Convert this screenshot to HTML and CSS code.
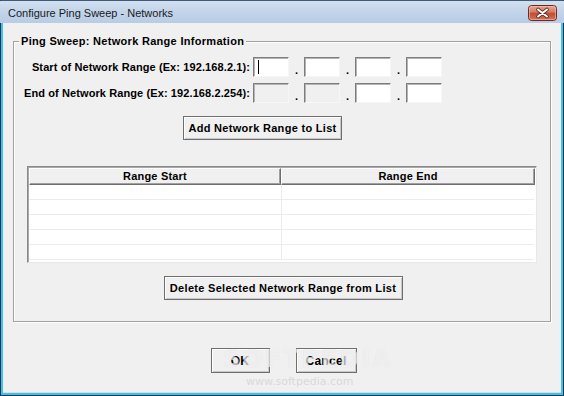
FILE: index.html
```html
<!DOCTYPE html>
<html>
<head>
<meta charset="utf-8">
<title>Configure Ping Sweep - Networks</title>
<link rel="stylesheet" href="styles.css">
</head>
<body>
<div class="window">
  <div class="titlebar">
    <span class="title">Configure Ping Sweep - Networks</span>
    <span class="close">
      <svg width="29" height="16" viewBox="0 0 29 16">
        <defs>
          <linearGradient id="cg" x1="0" y1="0" x2="0" y2="1">
            <stop offset="0" stop-color="#e8a796"/>
            <stop offset="0.45" stop-color="#d67a63"/>
            <stop offset="0.5" stop-color="#c24a30"/>
            <stop offset="1" stop-color="#d8725a"/>
          </linearGradient>
        </defs>
        <rect x="0.5" y="0.5" width="28" height="15" rx="3" fill="url(#cg)" stroke="#6e2a1c"/>
        <rect x="1.5" y="1.5" width="26" height="13" rx="2" fill="none" stroke="#f3c3b5" stroke-opacity="0.6"/>
        <path d="M10 4.5 L19 11.5 M19 4.5 L10 11.5" stroke="#5a2a22" stroke-width="3.6" stroke-linecap="round"/>
        <path d="M10 4.5 L19 11.5 M19 4.5 L10 11.5" stroke="#ffffff" stroke-width="2" stroke-linecap="round"/>
      </svg>
    </span>
  </div>
  <div class="client">
    <fieldset class="group">
      <legend class="legend">Ping Sweep: Network Range Information</legend>
      <div class="iprow">
        <span class="label">Start of Network Range (Ex: 192.168.2.1):</span>
        <span class="field"><span class="caret"></span></span><span class="dot">.</span>
        <span class="field"></span><span class="dot">.</span>
        <span class="field"></span><span class="dot">.</span>
        <span class="field"></span>
      </div>
      <div class="iprow">
        <span class="label">End of Network Range (Ex: 192.168.2.254):</span>
        <span class="field disabled"></span><span class="dot">.</span>
        <span class="field disabled"></span><span class="dot">.</span>
        <span class="field"></span><span class="dot">.</span>
        <span class="field"></span>
      </div>
      <div class="add-wrap">
        <button class="btn add">Add Network Range to List</button>
      </div>
      <div class="list">
        <div class="list-head">
          <div class="hcell">Range Start</div>
          <div class="hcell">Range End</div>
        </div>
        <div class="lrow"><div class="lcell"></div><div class="lcell"></div></div>
        <div class="lrow"><div class="lcell"></div><div class="lcell"></div></div>
        <div class="lrow"><div class="lcell"></div><div class="lcell"></div></div>
        <div class="lrow"><div class="lcell"></div><div class="lcell"></div></div>
        <div class="lrow"><div class="lcell"></div><div class="lcell"></div></div>
      </div>
      <div class="del-wrap">
        <button class="btn del">Delete Selected Network Range from List</button>
      </div>
    </fieldset>
    <div class="footer">
      <button class="btn ok">OK</button>
      <button class="btn cancel">Cancel</button>
    </div>
    <div class="wm-big">SOFTPEDIA</div>
    <div class="wm-url">www.softpedia.com</div>
  </div>
</div>
</body>
</html>
```
FILE: styles.css
```css
html, body {
  margin: 0;
  padding: 0;
  width: 564px;
  height: 396px;
  overflow: hidden;
  background: #1b2e45;
}

.window {
  box-sizing: border-box;
  width: 564px;
  height: 396px;
  border: 1px solid #1f3550;
  border-top-color: #3d5a7a;
  background: #3cc2ec;
  display: flex;
  flex-direction: column;
  font-family: "Liberation Sans", Arial, sans-serif;
}

.titlebar {
  height: 22px;
  flex: 0 0 22px;
  margin: 0 -1px;
  background: linear-gradient(#d3e0ef, #c4d5ea 45%, #b8cce5);
  display: flex;
  align-items: center;
  justify-content: space-between;
  padding: 0 7px 0 8px;
  box-sizing: border-box;
}

.title {
  font-family: "Liberation Sans", Arial, sans-serif;
  font-size: 11px;
  color: #1a1a1a;
  padding-top: 1px;
}

.close {
  display: flex;
  margin-top: 1px;
}

.client {
  position: relative;
  flex: 1;
  margin: 0 2px 2px 2px;
  background: #f0f0f0;
  box-shadow: inset 0 -1px 0 #dcdcdc;
  padding-top: 12px;
  font-size: 11px;
  font-weight: bold;
  color: #000;
}

.group {
  margin: 0 10px;
  padding: 9px 0 0 0;
  border: 1px solid #a0a0a0;
  box-shadow: inset 1px 1px 0 #ffffff, 1px 1px 0 #ffffff;
  min-inline-size: 0;
  height: 287px;
  box-sizing: border-box;
}

.legend {
  margin-left: 5px;
  padding: 0 2px;
  line-height: 13px;
  background: #f0f0f0;
  font-size: 11px;
  font-weight: bold;
  letter-spacing: 0.3px;
}

.iprow {
  display: flex;
  align-items: center;
  height: 20px;
  margin-bottom: 6px;
}

.label {
  flex: 0 0 236px;
  text-align: right;
  padding-right: 3px;
  white-space: nowrap;
  letter-spacing: 0.1px;
}

.field {
  position: relative;
  box-sizing: border-box;
  width: 36px;
  height: 20px;
  background: #ffffff;
  border: 1px solid;
  border-color: #7d7d7d #f6f6f6 #f6f6f6 #7d7d7d;
  box-shadow: inset 1px 1px 0 #b4b4b4;
}

.field.disabled {
  background: #f0f0f0;
}

.caret {
  display: block;
  width: 1px;
  height: 14px;
  margin: 2px 0 0 4px;
  background: #000;
}

.dot {
  width: 15px;
  text-align: center;
  align-self: flex-end;
  line-height: 14px;
}

.btn {
  font-family: "Liberation Sans", Arial, sans-serif;
  font-size: 11px;
  font-weight: bold;
  letter-spacing: 0.3px;
  color: #000;
  background: #f0f0f0;
  border: 1px solid #6e6e6e;
  box-shadow: inset 1px 1px 0 #ffffff, inset -1px -1px 0 #c8c8c8;
  padding: 0;
  box-sizing: border-box;
  border-radius: 0;
}

.add-wrap {
  margin-top: 13px;
  padding-left: 169px;
  display: flex;
}

.add {
  width: 159px;
  height: 24px;
}

.list {
  margin: 26px 0 0 13px;
  width: 510px;
  height: 97px;
  box-sizing: border-box;
  background: #ffffff;
  border: 1px solid;
  border-color: #8a8a8a #e8e8e8 #e8e8e8 #8a8a8a;
  box-shadow: inset 1px 1px 0 #a8a8a8;
  padding: 1px 2px 0 1px;
}

.list-head {
  display: grid;
  grid-template-columns: 252px 254px;
  height: 17px;
}

.hcell {
  box-sizing: border-box;
  background: #f0f0f0;
  border: 1px solid;
  border-color: #ffffff #6e6e6e #6e6e6e #ffffff;
  box-shadow: inset -1px -1px 0 #a0a0a0;
  text-align: center;
  line-height: 15px;
  letter-spacing: 0.2px;
}

.lrow {
  display: grid;
  grid-template-columns: 252px 254px;
  height: 15px;
  box-sizing: border-box;
  border-bottom: 1px solid #ececec;
}

.lcell + .lcell {
  border-left: 1px solid #ececec;
}

.del-wrap {
  margin-top: 13px;
  display: flex;
  justify-content: center;
  padding-left: 2px;
}

.del {
  width: 239px;
  height: 24px;
}

.footer {
  margin-top: 26px;
  display: flex;
  justify-content: center;
  gap: 26px;
  padding-left: 3px;
}

.ok {
  width: 59px;
  height: 25px;
  font-size: 12px;
}

.cancel {
  width: 61px;
  height: 25px;
  font-size: 12px;
}

.wm-big {
  position: absolute;
  left: 220px;
  top: 322px;
  font-family: "DejaVu Sans", sans-serif;
  font-size: 24px;
  font-weight: bold;
  letter-spacing: 2px;
  color: rgba(255, 255, 255, 0.5);
  text-shadow: 0 0 1px rgba(200, 200, 200, 0.45);
  pointer-events: none;
}

.wm-url {
  position: absolute;
  left: 243px;
  top: 352px;
  font-family: "DejaVu Sans", sans-serif;
  font-size: 11px;
  font-weight: normal;
  color: rgba(210, 210, 210, 0.8);
  pointer-events: none;
}
```
